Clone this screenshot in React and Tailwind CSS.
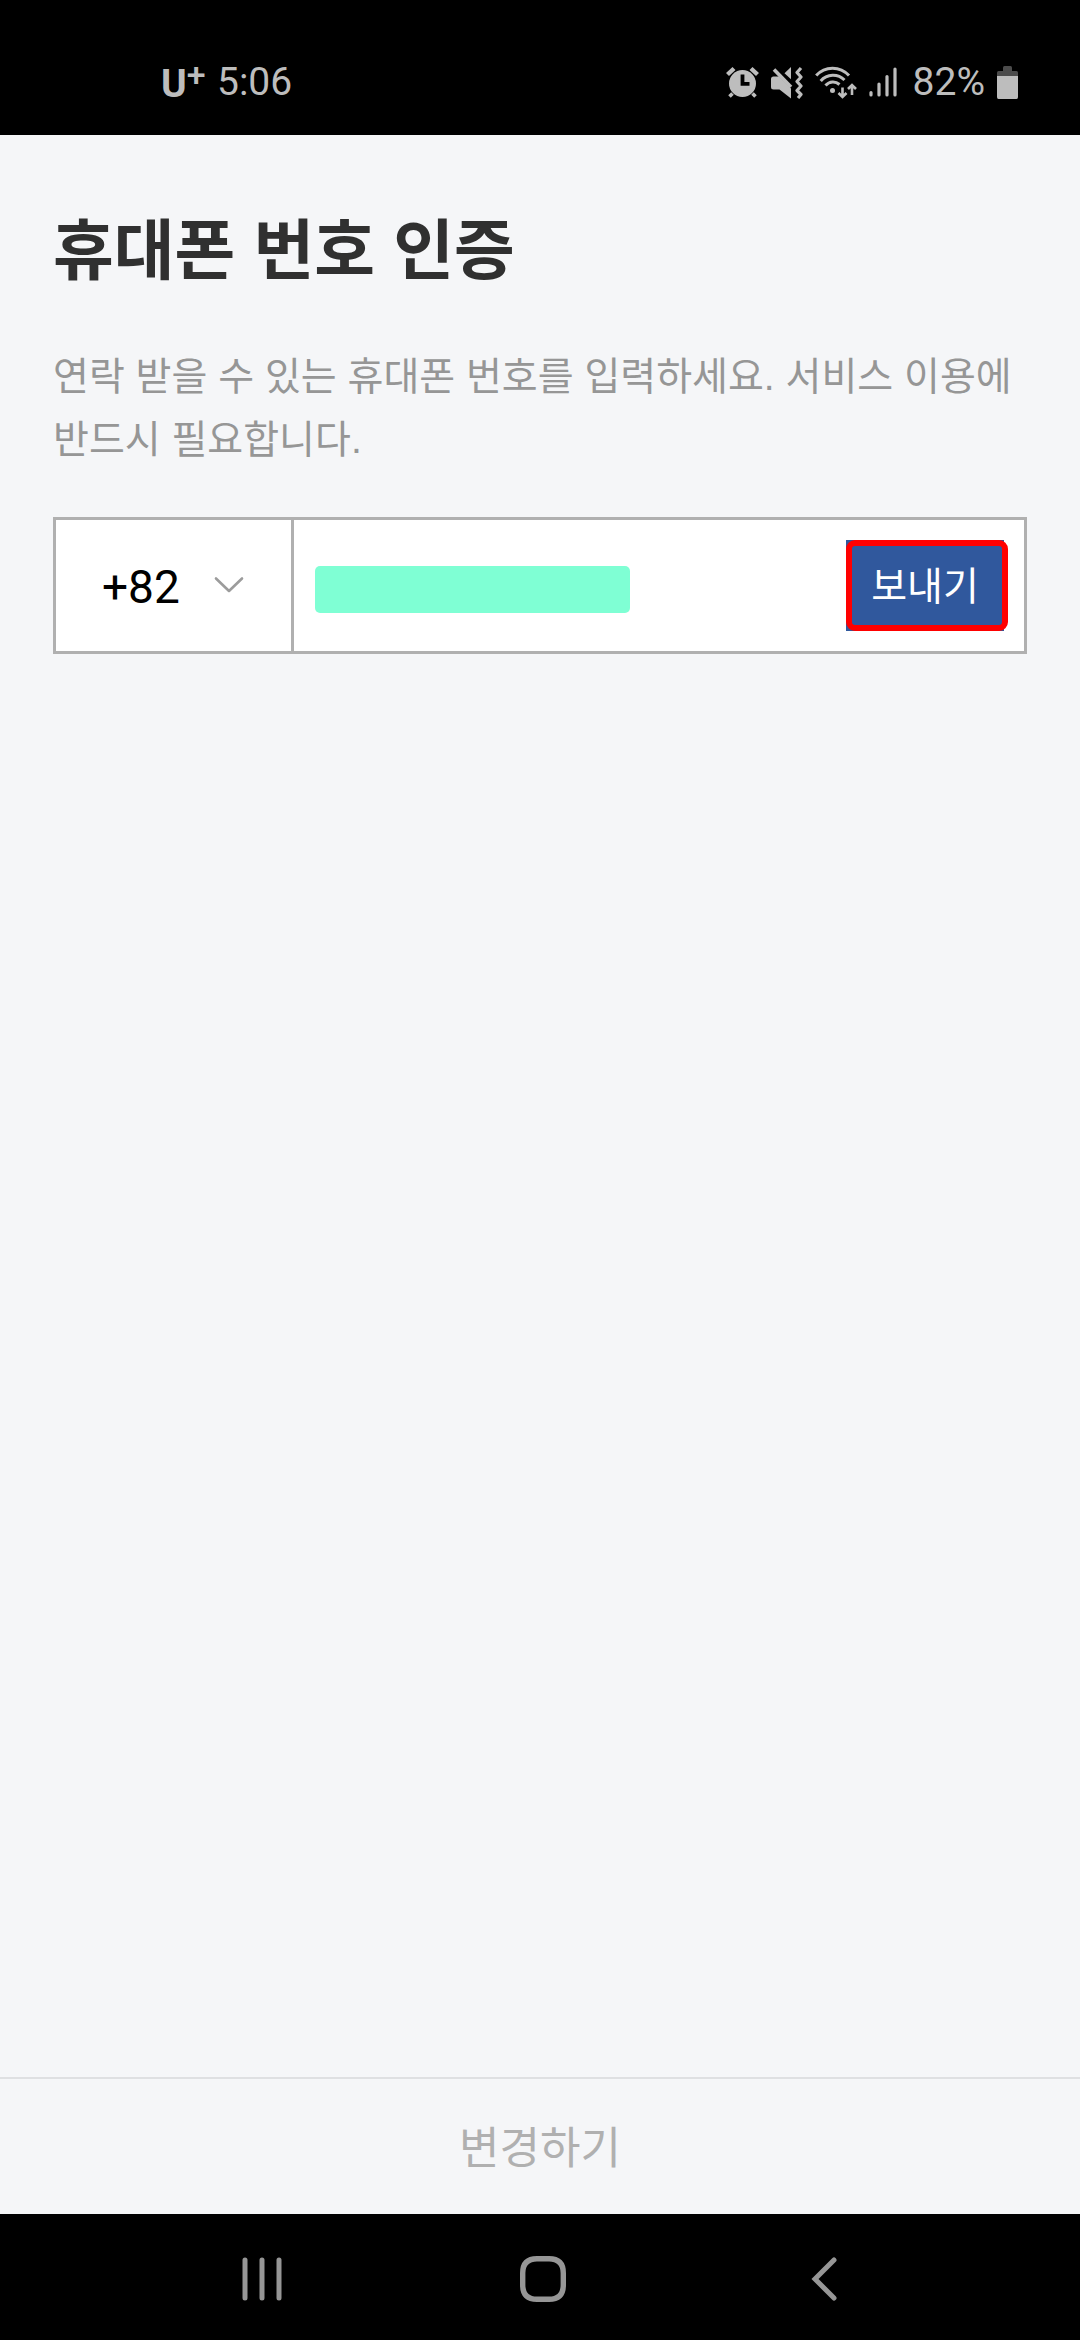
import React from "react";

function AlarmIcon() {
  return (
    <svg width="33" height="33" viewBox="0 0 33 33" fill="none" aria-hidden="true">
      <circle cx="16.5" cy="17.5" r="13.5" fill="#bdbdbd" />
      <path d="M6.5 27.5 3.5 30.5M26.5 27.5 29.5 30.5" stroke="#bdbdbd" strokeWidth="3.6" />
      <path d="M1.5 8.5 8 2.5M31.5 8.5 25 2.5" stroke="#bdbdbd" strokeWidth="4.4" />
      <path d="M16.5 8.5V17.8H23.5" stroke="#000" strokeWidth="3.8" />
    </svg>
  );
}

function MuteVibrateIcon() {
  return (
    <svg width="32" height="33" viewBox="0 0 32 33" fill="none" aria-hidden="true">
      <path d="M0 13Q0 10.5 2.5 10.5H8L20 22.5V32.5L8.5 23.5H2.5Q0 23.5 0 21Z" fill="#bdbdbd" />
      <path d="M3 3.5 20 21" stroke="#bdbdbd" strokeWidth="3.6" />
      <path d="M13.5 7.2 20 1V13.2Z" fill="#bdbdbd" />
      <path d="M30 2 26 6.500 30 11 26 15.500 30 20 26 24.500 30 28.500 27 32" stroke="#bdbdbd" strokeWidth="3.200" strokeLinejoin="round" />
    </svg>
  );
}

function WifiIcon() {
  return (
    <svg width="42" height="33" viewBox="0 0 42 33" fill="none" stroke="#bdbdbd" aria-hidden="true">
      <path d="M1.200 9.500C10-.3 25-.3 34 9.500" strokeWidth="3" />
      <path d="M5.700 15C12 7.500 23 7.500 29.500 14" strokeWidth="3" />
      <path d="M10.500 19.600C14.500 15 20.500 15 24.500 18.500" strokeWidth="3" />
      <circle cx="17.500" cy="24.500" r="2.500" fill="#bdbdbd" stroke="none" />
      <path d="M27.500 21.500V30.500M23.500 27 27.500 31 31.500 27M37 29V19M33 23 37 19 41 23" strokeWidth="2.600" />
    </svg>
  );
}

function SignalIcon() {
  return (
    <svg width="28" height="30" viewBox="0 0 28 30" stroke="#bdbdbd" strokeWidth="3.2" strokeLinecap="round" aria-hidden="true">
      <path d="M2 25.500V28M10 17V28M18 9.500V28M26 2V28" />
    </svg>
  );
}

function BatteryIcon() {
  return (
    <svg width="21" height="33" viewBox="0 0 21 33" aria-hidden="true">
      <path d="M6 6V1.500Q6 0 7.500 0H13.500Q15 0 15 1.500V6Z" fill="#4c4c4c" />
      <path d="M0 10V6.500Q0 5 1.500 5H19.500Q21 5 21 6.500V10Z" fill="#4c4c4c" />
      <path d="M0 10H21V31Q21 33 19.500 33H1.500Q0 33 0 31Z" fill="#bdbdbd" />
    </svg>
  );
}

function StatusBar() {
  return (
    <header className="flex h-[135px] items-center justify-between bg-black pt-[29px] pr-[62px] pl-[161px] font-[Roboto,sans-serif] text-[39px] leading-[48px] text-[#bdbdbd]">
      <div className="flex items-center">
        <span className="flex w-14 items-center pt-1 font-bold">
          U<sup className="top-0 mb-5 text-[34px] leading-8 font-medium">+</sup>
        </span>
        <time>5:06</time>
      </div>
      <div className="flex items-center">
        <AlarmIcon />
        <span className="ml-3">
          <MuteVibrateIcon />
        </span>
        <span className="ml-3">
          <WifiIcon />
        </span>
        <span className="ml-3">
          <SignalIcon />
        </span>
        <span className="ml-4">82%</span>
        <span className="ml-3">
          <BatteryIcon />
        </span>
      </div>
    </header>
  );
}

function PhoneField() {
  return (
    <form
      className="mt-[46px] flex h-[137px] border-[3px] border-[#b0b0b0] bg-white"
      onSubmit={(event) => event.preventDefault()}
    >
      <div className="relative w-[238px] shrink-0 border-r-[3px] border-[#b0b0b0]">
        <select
          aria-label="국가 번호"
          defaultValue="+82"
          className="h-full w-full appearance-none bg-transparent pt-1 pl-[46px] font-[Roboto,sans-serif] text-[46px] text-black outline-none"
        >
          <option value="+82">+82</option>
        </select>
        <svg
          className="pointer-events-none absolute top-[56px] right-[47px]"
          width="30"
          height="18"
          viewBox="0 0 30 18"
          fill="none"
          stroke="#9c9c9c"
          strokeWidth="2.6"
          strokeLinecap="round"
          strokeLinejoin="round"
          aria-hidden="true"
        >
          <path d="M2 2.500 15 15 28 2.500" />
        </svg>
      </div>
      <div className="relative flex min-w-0 flex-1 items-center">
        <input
          type="tel"
          aria-label="휴대폰 번호"
          className="h-full w-full bg-transparent px-[21px] font-[Roboto,sans-serif] text-[46px] outline-none"
        />
        <span className="pointer-events-none absolute top-[46px] left-[21px] h-[47px] w-[315px] rounded-[5px] bg-[#7fffd4]" />
      </div>
      <div className="relative mr-5 self-center">
        <button type="submit" className="block h-[91px] w-[158px] bg-[#30589d] pt-1 text-[39px] text-white">
          보내기
        </button>
        <span className="pointer-events-none absolute inset-y-0 right-[-4px] left-0 rounded-[9px] border-[6px] border-[#ff0000]" />
      </div>
    </form>
  );
}

function NavigationBar() {
  return (
    <nav className="grid h-[126px] grid-cols-3 bg-black pt-1 pr-[116px] pl-[121px]">
      <button type="button" aria-label="최근 앱" className="flex items-center justify-center">
        <svg width="40" height="44" viewBox="0 0 40 44" stroke="#969696" strokeWidth="5" strokeLinecap="round">
          <path d="M3 3V41M20 3V41M37 3V41" />
        </svg>
      </button>
      <button type="button" aria-label="홈" className="flex items-center justify-center">
        <svg width="46" height="46" viewBox="0 0 46 46" fill="none" stroke="#969696" strokeWidth="5.4">
          <path d="M17 2.700H29C38.500 2.700 43.300 7.500 43.300 17V29C43.300 38.500 38.500 43.300 29 43.300H17C7.500 43.300 2.700 38.500 2.700 29V17C2.700 7.500 7.500 2.700 17 2.700Z" />
        </svg>
      </button>
      <button type="button" aria-label="뒤로" className="flex items-center justify-center">
        <svg width="26" height="44" viewBox="0 0 26 44" fill="none" stroke="#969696" strokeWidth="5" strokeLinecap="round">
          <path d="M23 3 4 22 23 41" />
        </svg>
      </button>
    </nav>
  );
}

export default function App() {
  return (
    <div className="flex min-h-screen flex-col bg-[#f5f6f8] font-['Liberation_Sans','Noto_Sans_CJK_KR',sans-serif]">
      <StatusBar />
      <main className="flex-1 px-[53px] pt-[68px]">
        <h1 className="text-[66px] leading-[96px] font-bold text-[#303030]">휴대폰 번호 인증</h1>
        <p className="mt-[46px] text-[39px] leading-[63px] break-keep text-[#969696]">
          연락 받을 수 있는 휴대폰 번호를 입력하세요. 서비스 이용에 반드시 필요합니다.
        </p>
        <PhoneField />
      </main>
      <button type="button" className="h-[137px] border-t-2 border-[#dfe0e2] pt-1 text-[44px] text-[#b0b0b0]">
        변경하기
      </button>
      <NavigationBar />
    </div>
  );
}
